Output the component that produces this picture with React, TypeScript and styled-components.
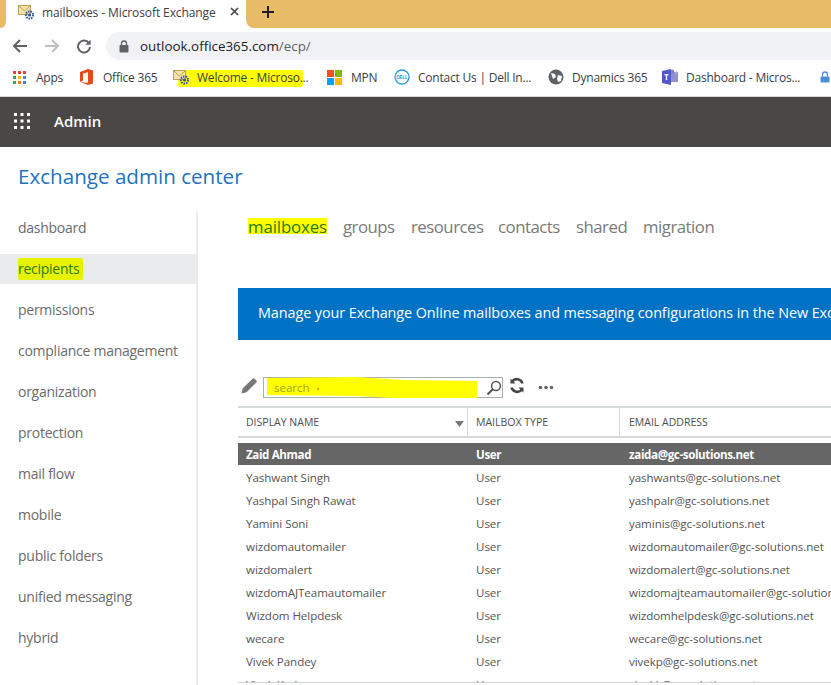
import React from "react";
import styled, { createGlobalStyle } from "styled-components";

const Global = createGlobalStyle`
  html, body { margin: 0; padding: 0; background: #fff; }
  body { width: 831px; height: 685px; overflow: hidden; font-family: "Open Sans", "Noto Sans", sans-serif; }
  * { box-sizing: border-box; }
`;

const Page = styled.div`
  width: 831px;
  height: 685px;
  overflow: hidden;
  display: flex;
  flex-direction: column;
  background: #fff;
`;

/* browser chrome */
const TabStrip = styled.div`
  height: 28px;
  display: flex;
  background: #fff;
  flex: none;
`;
const GoldCap = styled.div`
  width: 6px;
  background: #e8bc67;
  border-bottom-right-radius: 6px;
`;
const ActiveTab = styled.div`
  width: 240px;
  display: flex;
  align-items: center;
  padding-left: 12px;
  padding-bottom: 4px;
  font-size: 12px;
  letter-spacing: -0.1px;
  color: #3c4043;
  position: relative;
`;
const TabTitle = styled.span`
  margin-left: 7px;
  white-space: nowrap;
`;
const TabClose = styled.svg`
  position: absolute;
  left: 223px;
  top: 6px;
`;
const GoldRest = styled.div`
  flex: 1;
  background: #e8bc67;
  border-bottom-left-radius: 8px;
  display: flex;
  align-items: center;
  padding-left: 15px;
  padding-bottom: 4px;
`;
const AddressRow = styled.div`
  height: 32px;
  flex: none;
  padding-top: 4px;
  display: flex;
  background: #fff;
`;
const NavButtons = styled.div`
  width: 106px;
  height: 28px;
  display: flex;
  align-items: center;
  padding-left: 12px;
  gap: 16px;
`;
const Omnibox = styled.div`
  flex: 1;
  height: 28px;
  background: #f0f2f5;
  border-radius: 14px 0 0 14px;
  display: flex;
  align-items: center;
  padding-left: 13px;
  gap: 11px;
  font-size: 13.4px;
  color: #202124;
`;
const UrlDim = styled.span`
  margin-left: -11px;
  color: #5f6368;
`;
const BookmarkBar = styled.div`
  height: 37px;
  flex: none;
  display: flex;
  align-items: center;
  padding-left: 13px;
  padding-bottom: 2px;
  background: #fff;
  border-bottom: 1px solid #d9dadc;
  position: relative;
`;
const Bookmark = styled.div<{ $w: number; $gap?: number }>`
  width: ${(p) => p.$w}px;
  flex: none;
  display: flex;
  align-items: center;
  gap: ${(p) => p.$gap ?? 9}px;
  font-size: 12px;
  letter-spacing: -0.22px;
  color: #3c4043;
  white-space: nowrap;
`;
const BookmarkMark = styled.div`
  position: absolute;
  left: 178px;
  top: 10px;
  width: 125px;
  height: 17px;
  background: #ffff00;
  border-radius: 2px;
`;
const BookmarkLabel = styled.span`
  position: relative;
`;
const BookmarkIcon = styled.svg`
  position: relative;
  flex: none;
`;
const DellText = styled.text`
  font-family: "Liberation Sans", sans-serif;
  font-size: 4.6px;
  font-weight: 700;
  fill: #2a9bd8;
  text-anchor: middle;
`;

/* suite bar */
const SuiteBar = styled.div`
  height: 50px;
  flex: none;
  background: #494846;
  display: flex;
  align-items: center;
  padding-left: 14px;
  padding-bottom: 2px;
  gap: 24px;
  color: #fff;
  font-size: 15px;
  font-weight: 600;
`;
const PageTitle = styled.h1`
  margin: 0;
  height: 65px;
  flex: none;
  padding: 14px 0 0 18px;
  font-size: 20.6px;
  line-height: 30px;
  font-weight: 400;
  color: #1f72bf;
`;
const Body = styled.div`
  flex: 1;
  min-height: 0;
  display: flex;
`;

/* sidebar */
const Sidebar = styled.nav`
  width: 198px;
  flex: none;
  border-right: 2px solid #ececec;
  padding-top: 1px;
  display: flex;
  flex-direction: column;
  gap: 11px;
`;
const NavItem = styled.div<{ $active?: boolean }>`
  height: 30px;
  padding-left: 18px;
  padding-bottom: ${(p) => (p.$active ? 0 : 2)}px;
  display: flex;
  align-items: center;
  font-size: 14px;
  letter-spacing: -0.26px;
  color: #6b6b6b;
  background: ${(p) => (p.$active ? "#eaebec" : "transparent")};
`;
const RecipientsMark = styled.span`
  background: #e6f200;
  color: #2b7d10;
  padding: 1px 4px 2px 0;
  border-radius: 2px;
`;

/* content */
const Content = styled.main`
  flex: 1;
  min-width: 0;
  overflow: hidden;
  padding-left: 40px;
`;
const TabsRow = styled.div`
  height: 76px;
  display: flex;
  padding-left: 10px;
  padding-top: 1px;
  align-items: flex-start;
`;
const SubTab = styled.div<{ $w: number }>`
  width: ${(p) => p.$w}px;
  flex: none;
  font-size: 16.8px;
  line-height: 28px;
  letter-spacing: -0.5px;
  color: #7a7a7a;
`;
const SubTabMark = styled.span`
  background: linear-gradient(#fff 0 5px, #ffff00 5px 21px, #fff 21px);
  color: #1f7a10;
  display: inline-block;
  width: 79px;
  height: 28px;
  white-space: nowrap;
  letter-spacing: -0.1px;
`;
const Banner = styled.div`
  height: 52px;
  background: #0072c6;
  color: #fff;
  font-size: 14.4px;
  line-height: 50px;
  letter-spacing: -0.08px;
  padding-left: 20px;
  white-space: nowrap;
  overflow: hidden;
`;
const ActionBar = styled.div`
  height: 66px;
  padding: 37px 0 0 3px;
  display: flex;
  align-items: flex-start;
`;
const SearchBox = styled.div`
  width: 240px;
  height: 21px;
  margin-left: 5px;
  border: 1px solid #a8b0ae;
  position: relative;
  display: flex;
  align-items: center;
  padding-left: 10px;
  font-size: 11.5px;
  color: #a3a61a;
`;
const SearchInk = styled.svg`
  position: absolute;
  left: 1px;
  top: -1px;
`;
const SearchText = styled.span`
  position: relative;
`;
const SearchGlass = styled.svg`
  position: absolute;
  right: 0;
  top: 2px;
`;
const ActionIcon = styled.svg<{ $ml: number }>`
  margin-left: ${(p) => p.$ml}px;
  flex: none;
`;
const HeaderRow = styled.div`
  height: 32px;
  border-top: 2px solid #d6dad9;
  border-bottom: 2px solid #d6dad9;
  display: grid;
  grid-template-columns: 229px 152px 1fr;
  font-size: 10.5px;
  color: #4d4d4d;
  margin-bottom: 5px;
`;
const HeaderCell = styled.div<{ $divider?: boolean; $pad: number }>`
  display: flex;
  align-items: center;
  padding-left: ${(p) => p.$pad}px;
  position: relative;
  white-space: nowrap;
  border-left: ${(p) => (p.$divider ? "1px solid #d6dad9" : "none")};
`;
const SortCaret = styled.svg`
  position: absolute;
  left: 217px;
  top: 13px;
`;
const Rows = styled.div`
  height: 240px;
  overflow: hidden;
  border-bottom: 1px solid #d0d5d4;
`;
const Row = styled.div<{ $selected?: boolean }>`
  height: ${(p) => (p.$selected ? 22 : 23)}px;
  margin-bottom: ${(p) => (p.$selected ? 1 : 0)}px;
  display: grid;
  grid-template-columns: 238px 153px 1fr;
  align-items: center;
  font-size: 11.6px;
  letter-spacing: ${(p) => (p.$selected ? "-0.38px" : "-0.07px")};
  white-space: nowrap;
  font-weight: ${(p) => (p.$selected ? 700 : 400)};
  color: ${(p) => (p.$selected ? "#fff" : "#555")};
  background: ${(p) => (p.$selected ? "#666" : "transparent")};
`;
const NameCell = styled.div`
  padding-left: 8px;
`;

const MailIcon = () => (
  <BookmarkIcon width="17" height="16" viewBox="0 0 17 16">
    <rect x="0.5" y="1.5" width="12" height="9" fill="#f5e3a4" stroke="#b9a05c" />
    <path d="M1 2l5.5 5L12 2" fill="none" stroke="#b9a05c" />
    <circle cx="11.5" cy="11" r="3.6" fill="none" stroke="#2f4f9a" strokeWidth="2" strokeDasharray="1.5 1" />
    <circle cx="11.5" cy="11" r="1.6" fill="#2f4f9a" />
  </BookmarkIcon>
);

const names: [string, string][] = [
  ["Yashwant Singh", "yashwants@gc-solutions.net"],
  ["Yashpal Singh Rawat", "yashpalr@gc-solutions.net"],
  ["Yamini Soni", "yaminis@gc-solutions.net"],
  ["wizdomautomailer", "wizdomautomailer@gc-solutions.net"],
  ["wizdomalert", "wizdomalert@gc-solutions.net"],
  ["wizdomAJTeamautomailer", "wizdomajteamautomailer@gc-solutions.net"],
  ["Wizdom Helpdesk", "wizdomhelpdesk@gc-solutions.net"],
  ["wecare", "wecare@gc-solutions.net"],
  ["Vivek Pandey", "vivekp@gc-solutions.net"],
  ["Vivek Kadam", "vivekk@gc-solutions.net"],
];

const nav = [
  "dashboard",
  "recipients",
  "permissions",
  "compliance management",
  "organization",
  "protection",
  "mail flow",
  "mobile",
  "public folders",
  "unified messaging",
  "hybrid",
];

export default function App() {
  return (
    <Page>
      <Global />
      <TabStrip>
        <GoldCap />
        <ActiveTab>
          <MailIcon />
          <TabTitle>mailboxes - Microsoft Exchange</TabTitle>
          <TabClose width="12" height="12" viewBox="0 0 12 12">
            <path d="M2 2l7 7M9 2l-7 7" stroke="#4a4a4a" strokeWidth="1.7" />
          </TabClose>
        </ActiveTab>
        <GoldRest>
          <svg width="14" height="14" viewBox="0 0 14 14">
            <path d="M7 1v12M1 7h12" stroke="#1f1f1f" strokeWidth="2" />
          </svg>
        </GoldRest>
      </TabStrip>
      <AddressRow>
        <NavButtons>
          <svg width="16" height="16" viewBox="0 0 16 16">
            <path d="M15 8H2M8 2L2 8l6 6" fill="none" stroke="#5f6368" strokeWidth="2" />
          </svg>
          <svg width="16" height="16" viewBox="0 0 16 16">
            <path d="M1 8h13M8 2l6 6-6 6" fill="none" stroke="#bcc0c4" strokeWidth="2" />
          </svg>
          <svg width="16" height="16" viewBox="0 0 16 16">
            <path d="M13 5.2A6 6 0 1 0 14 9" fill="none" stroke="#5f6368" strokeWidth="2" />
            <path d="M14.6 1.5v5.2H9.4z" fill="#5f6368" />
          </svg>
        </NavButtons>
        <Omnibox>
          <svg width="10" height="13" viewBox="0 0 10 13">
            <path d="M2.5 5V3.5a2.5 2.5 0 0 1 5 0V5" fill="none" stroke="#5f6368" strokeWidth="1.3" />
            <rect x="0.5" y="5" width="9" height="7.5" rx="1" fill="#5f6368" />
          </svg>
          <span>outlook.office365.com</span>
          <UrlDim>/ecp/</UrlDim>
        </Omnibox>
      </AddressRow>
      <BookmarkBar>
        <BookmarkMark />
        <Bookmark $w={67} $gap={10}>
          <BookmarkIcon width="13" height="13" viewBox="0 0 13 13">
            {[
              ["#ea4335", 0, 0], ["#ea4335", 5, 0], ["#ea4335", 10, 0],
              ["#34a853", 0, 5], ["#fbbc05", 5, 5], ["#4285f4", 10, 5],
              ["#34a853", 0, 10], ["#fa7b17", 5, 10], ["#4285f4", 10, 10],
            ].map(([c, x, y], i) => (
              <rect key={i} x={x as number} y={y as number} width="3" height="3" fill={c as string} />
            ))}
          </BookmarkIcon>
          <BookmarkLabel>Apps</BookmarkLabel>
        </Bookmark>
        <Bookmark $w={93} $gap={10}>
          <BookmarkIcon width="13" height="16" viewBox="0 0 13 16">
            <path d="M0 3l8-3 5 1.5v13L8 16l-8-3 8 1V3.2L3 4.5v7L0 13z" fill="#e64a19" />
          </BookmarkIcon>
          <BookmarkLabel>Office 365</BookmarkLabel>
        </Bookmark>
        <Bookmark $w={154} $gap={7}>
          <MailIcon />
          <BookmarkLabel>Welcome - Microso...</BookmarkLabel>
        </Bookmark>
        <Bookmark $w={67} $gap={9}>
          <BookmarkIcon width="15" height="15" viewBox="0 0 15 15">
            <rect width="7" height="7" fill="#f25022" />
            <rect x="8" width="7" height="7" fill="#7fba00" />
            <rect y="8" width="7" height="7" fill="#00a4ef" />
            <rect x="8" y="8" width="7" height="7" fill="#ffb900" />
          </BookmarkIcon>
          <BookmarkLabel>MPN</BookmarkLabel>
        </Bookmark>
        <Bookmark $w={154} $gap={8}>
          <BookmarkIcon width="16" height="16" viewBox="0 0 16 16">
            <circle cx="8" cy="8" r="7" fill="#fff" stroke="#2a9bd8" strokeWidth="1.3" />
            <DellText x="8" y="9.7">DELL</DellText>
          </BookmarkIcon>
          <BookmarkLabel>Contact Us | Dell In...</BookmarkLabel>
        </Bookmark>
        <Bookmark $w={114} $gap={8}>
          <BookmarkIcon width="16" height="16" viewBox="0 0 16 16">
            <circle cx="8" cy="8" r="7.5" fill="#5f6368" />
            <path d="M3 4l4 1 1 3-3 2zM10 6l4 1-1 5-3 1-1-3z" fill="#fff" />
          </BookmarkIcon>
          <BookmarkLabel>Dynamics 365</BookmarkLabel>
        </Bookmark>
        <Bookmark $w={158} $gap={8}>
          <BookmarkIcon width="16" height="16" viewBox="0 0 16 16">
            <rect x="8" y="3" width="8" height="10" fill="#8f92cf" />
            <circle cx="10" cy="2.8" r="2.2" fill="#7b83c9" />
            <circle cx="14" cy="4" r="1.6" fill="#a2a6dc" />
            <path d="M0 2l9-2v16l-9-2z" fill="#5059c9" />
            <path d="M2.5 5h4v1.3H5.2V11H3.8V6.3H2.5z" fill="#fff" />
          </BookmarkIcon>
          <BookmarkLabel>Dashboard - Micros...</BookmarkLabel>
        </Bookmark>
        <BookmarkIcon width="10" height="13" viewBox="0 0 10 13">
          <path d="M2.5 5.5V3.5a2.5 2.5 0 0 1 5 0v2" fill="none" stroke="#4a90d9" strokeWidth="1.3" />
          <rect x="0.5" y="5.5" width="9" height="6" rx="1" fill="#4a90d9" />
        </BookmarkIcon>
      </BookmarkBar>
      <SuiteBar>
        <svg width="16" height="16" viewBox="0 0 16 16" fill="#fff">
          {[0, 6.5, 13].flatMap((y) =>
            [0, 6.5, 13].map((x) => <rect key={`${x}-${y}`} x={x} y={y} width="3" height="3" />)
          )}
        </svg>
        <span>Admin</span>
      </SuiteBar>
      <PageTitle>Exchange admin center</PageTitle>
      <Body>
        <Sidebar>
          {nav.map((n) => (
            <NavItem key={n} $active={n === "recipients"}>
              {n === "recipients" ? <RecipientsMark>{n}</RecipientsMark> : n}
            </NavItem>
          ))}
        </Sidebar>
        <Content>
          <TabsRow>
            <SubTab $w={95}>
              <SubTabMark>mailboxes</SubTabMark>
            </SubTab>
            <SubTab $w={68}>groups</SubTab>
            <SubTab $w={87}>resources</SubTab>
            <SubTab $w={78}>contacts</SubTab>
            <SubTab $w={67}>shared</SubTab>
            <SubTab $w={90}>migration</SubTab>
          </TabsRow>
          <Banner>Manage your Exchange Online mailboxes and messaging configurations in the New Exchange admin center</Banner>
          <ActionBar>
            <svg width="17" height="17" viewBox="0 0 17 17">
              <path d="M0.5 16.5l1.2-5L11.5 1.7a1.5 1.5 0 0 1 2.1 0l1.7 1.7a1.5 1.5 0 0 1 0 2.1L5.5 15.3z" fill="#777" />
            </svg>
            <SearchBox>
              <SearchInk width="212" height="21" viewBox="0 0 212 21">
                <path d="M2 1L90 0L140 3L212 4V21H128L90 19L2 18z" fill="#ffff00" />
                <circle cx="53" cy="12" r="0.8" fill="#e02020" />
              </SearchInk>
              <SearchText>search</SearchText>
              <SearchGlass width="16" height="16" viewBox="0 0 16 16">
                <circle cx="10" cy="6" r="4.4" fill="none" stroke="#555" strokeWidth="1.5" />
                <path d="M6.8 9.2L1.5 14.5" stroke="#555" strokeWidth="2" />
              </SearchGlass>
            </SearchBox>
            <ActionIcon $ml={6} width="16" height="17" viewBox="0 0 16 17">
              <path d="M13.5 6.5A6 6 0 0 0 3 4.5M2.5 10.5A6 6 0 0 0 13 12.5" fill="none" stroke="#444" strokeWidth="2.6" />
              <path d="M1.5 1.5v5h5zM14.5 15.5v-5h-5z" fill="#444" />
            </ActionIcon>
            <ActionIcon $ml={13} width="16" height="17" viewBox="0 0 16 17">
              <circle cx="2.5" cy="10.5" r="1.8" fill="#666" />
              <circle cx="8" cy="10.5" r="1.8" fill="#666" />
              <circle cx="13.5" cy="10.5" r="1.8" fill="#666" />
            </ActionIcon>
          </ActionBar>
          <HeaderRow>
            <HeaderCell $pad={8}>
              DISPLAY NAME
              <SortCaret width="9" height="6" viewBox="0 0 9 6">
                <path d="M0 0h9L4.5 6z" fill="#777" />
              </SortCaret>
            </HeaderCell>
            <HeaderCell $divider $pad={8}>MAILBOX TYPE</HeaderCell>
            <HeaderCell $divider $pad={9}>EMAIL ADDRESS</HeaderCell>
          </HeaderRow>
          <Rows>
            <Row $selected>
              <NameCell>Zaid Ahmad</NameCell>
              <div>User</div>
              <div>zaida@gc-solutions.net</div>
            </Row>
            {names.map(([n, e]) => (
              <Row key={n}>
                <NameCell>{n}</NameCell>
                <div>User</div>
                <div>{e}</div>
              </Row>
            ))}
          </Rows>
        </Content>
      </Body>
    </Page>
  );
}
